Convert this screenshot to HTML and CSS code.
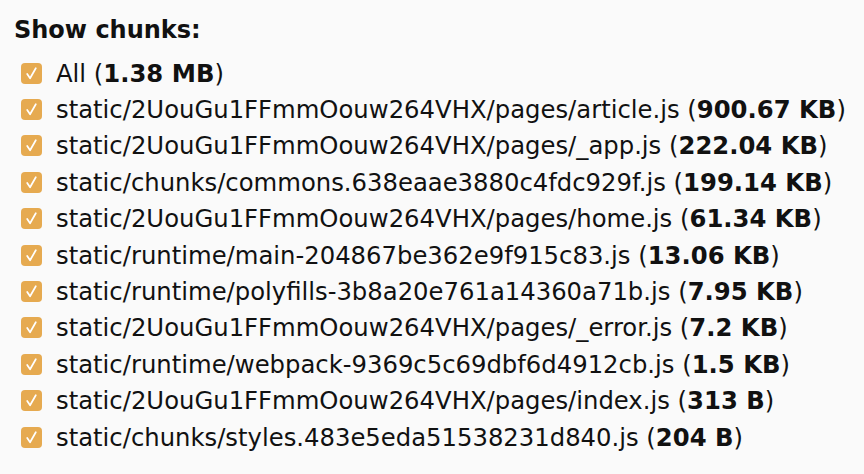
FILE: index.html
```html
<!DOCTYPE html>
<html>
<head>
<meta charset="utf-8">
<link rel="stylesheet" href="styles.css">
</head>
<body>
<div class="panel">
  <div class="title">Show chunks:</div>
  <ul class="list">
    <li class="row"><span class="box"><svg viewBox="0 0 22 22"><path d="M6.5 11.5 L9.5 16 L15.5 5.5"/></svg></span><span>All (<b>1.38 MB</b>)</span></li>
    <li class="row"><span class="box"><svg viewBox="0 0 22 22"><path d="M6.5 11.5 L9.5 16 L15.5 5.5"/></svg></span><span>static/2UouGu1FFmmOouw264VHX/pages/article.js (<b>900.67 KB</b>)</span></li>
    <li class="row"><span class="box"><svg viewBox="0 0 22 22"><path d="M6.5 11.5 L9.5 16 L15.5 5.5"/></svg></span><span>static/2UouGu1FFmmOouw264VHX/pages/_app.js (<b>222.04 KB</b>)</span></li>
    <li class="row"><span class="box"><svg viewBox="0 0 22 22"><path d="M6.5 11.5 L9.5 16 L15.5 5.5"/></svg></span><span>static/chunks/commons.638eaae3880c4fdc929f.js (<b>199.14 KB</b>)</span></li>
    <li class="row"><span class="box"><svg viewBox="0 0 22 22"><path d="M6.5 11.5 L9.5 16 L15.5 5.5"/></svg></span><span>static/2UouGu1FFmmOouw264VHX/pages/home.js (<b>61.34 KB</b>)</span></li>
    <li class="row"><span class="box"><svg viewBox="0 0 22 22"><path d="M6.5 11.5 L9.5 16 L15.5 5.5"/></svg></span><span>static/runtime/main-204867be362e9f915c83.js (<b>13.06 KB</b>)</span></li>
    <li class="row"><span class="box"><svg viewBox="0 0 22 22"><path d="M6.5 11.5 L9.5 16 L15.5 5.5"/></svg></span><span>static/runtime/polyfills-3b8a20e761a14360a71b.js (<b>7.95 KB</b>)</span></li>
    <li class="row"><span class="box"><svg viewBox="0 0 22 22"><path d="M6.5 11.5 L9.5 16 L15.5 5.5"/></svg></span><span>static/2UouGu1FFmmOouw264VHX/pages/_error.js (<b>7.2 KB</b>)</span></li>
    <li class="row"><span class="box"><svg viewBox="0 0 22 22"><path d="M6.5 11.5 L9.5 16 L15.5 5.5"/></svg></span><span>static/runtime/webpack-9369c5c69dbf6d4912cb.js (<b>1.5 KB</b>)</span></li>
    <li class="row"><span class="box"><svg viewBox="0 0 22 22"><path d="M6.5 11.5 L9.5 16 L15.5 5.5"/></svg></span><span>static/2UouGu1FFmmOouw264VHX/pages/index.js (<b>313 B</b>)</span></li>
    <li class="row"><span class="box"><svg viewBox="0 0 22 22"><path d="M6.5 11.5 L9.5 16 L15.5 5.5"/></svg></span><span>static/chunks/styles.483e5eda51538231d840.js (<b>204 B</b>)</span></li>
  </ul>
</div>
</body>
</html>
```
FILE: styles.css
```css
html, body {
  margin: 0;
  padding: 0;
  background: #fafafa;
}
body {
  font-family: "DejaVu Sans", Verdana, sans-serif;
  color: #111;
}
.panel {
  padding: 15px 0 0 14px;
}
.title {
  font-weight: bold;
  font-size: 24px;
  line-height: 30px;
  margin-bottom: 10px;
}
.list {
  list-style: none;
  margin: 0;
  padding: 0 0 0 7px;
}
.row {
  display: flex;
  align-items: center;
  gap: 14px;
  height: 36.4px;
  font-size: 24.3px;
  white-space: nowrap;
}
.row b {
  font-weight: bold;
}
.box {
  flex: none;
  width: 21px;
  height: 21px;
  border-radius: 4px;
  background: #e6aa50;
  display: flex;
}
.box svg {
  width: 21px;
  height: 21px;
}
.box path {
  fill: none;
  stroke: #fff;
  stroke-width: 1.8;
  stroke-linecap: round;
  stroke-linejoin: round;
}
```
